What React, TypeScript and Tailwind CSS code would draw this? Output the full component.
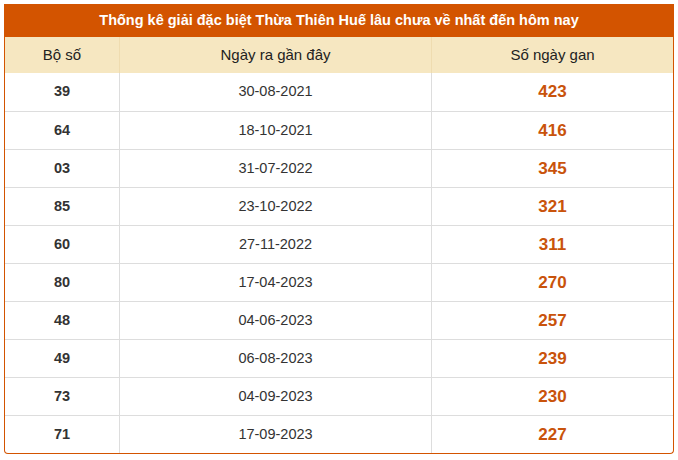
const rows = [
	["39", "30-08-2021", "423"],
	["64", "18-10-2021", "416"],
	["03", "31-07-2022", "345"],
	["85", "23-10-2022", "321"],
	["60", "27-11-2022", "311"],
	["80", "17-04-2023", "270"],
	["48", "04-06-2023", "257"],
	["49", "06-08-2023", "239"],
	["73", "04-09-2023", "230"],
	["71", "17-09-2023", "227"],
];

export default function App() {
	return (
		<div className="min-h-[460px] bg-white px-[4px] pt-[4px] font-['Liberation_Sans',Arial,sans-serif]">
			<div className="w-[670px] overflow-hidden rounded-b-[4px] border-x border-b border-[#d35400]">
				<div className="flex h-[33px] items-center justify-center bg-[#d35400] text-[14.5px] font-bold text-white">
					Thống kê giải đặc biệt Thừa Thiên Huế lâu chưa về nhất đến hôm nay
				</div>
				<div className="grid h-[36px] grid-cols-[114px_312px_1fr] bg-[#f6e7c1] text-[15px] text-[#222]">
					<div className="flex items-center justify-center">Bộ số</div>
					<div className="flex items-center justify-center border-l border-[#efdcb0]">
						Ngày ra gần đây
					</div>
					<div className="flex items-center justify-center border-l border-[#efdcb0]">
						Số ngày gan
					</div>
				</div>
				{rows.map(([num, date, gan], i) => (
					<div
						key={num}
						className={`grid h-[38px] grid-cols-[114px_312px_1fr] text-[#333] ${i > 0 ? "border-t border-[#ddd]" : ""}`}
					>
						<div className="flex items-center justify-center text-[14.5px] font-bold">{num}</div>
						<div className="flex items-center justify-center border-l border-[#ddd] text-[14.5px]">
							{date}
						</div>
						<div className="flex items-center justify-center border-l border-[#ddd] text-[17px] font-bold text-[#c9530b]">
							{gan}
						</div>
					</div>
				))}
			</div>
		</div>
	);
}
